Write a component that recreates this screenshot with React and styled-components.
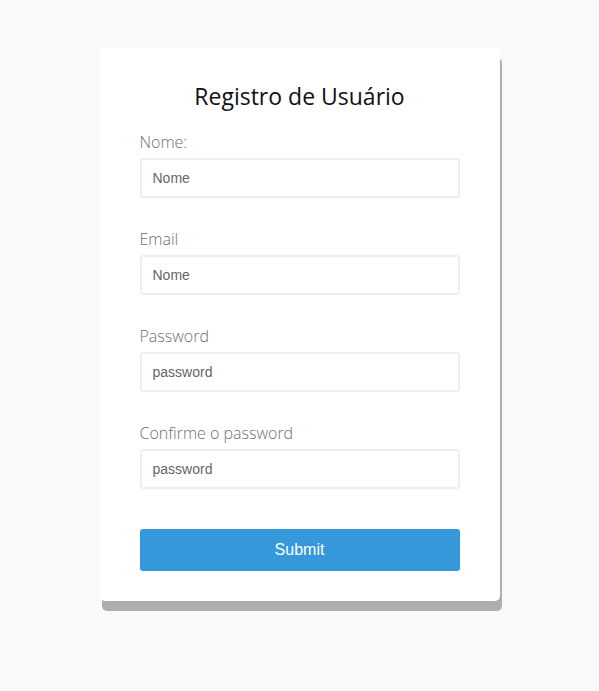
import React from 'react';
import styled, { createGlobalStyle } from 'styled-components';

const GlobalStyle = createGlobalStyle`
  * { box-sizing: border-box; }
  body {
    margin: 0;
    background: #f8f9fa;
    font-family: "Open Sans", sans-serif;
  }
`;

const Page = styled.div`
  display: flex;
  justify-content: center;
  padding: 48px 0 80px;
`;

const Card = styled.form`
  width: 400px;
  background: #ffffff;
  border-radius: 5px;
  padding: 32px 40px 30px;
  box-shadow: 2px 10px 0 #adaeae;
  display: flex;
  flex-direction: column;
`;

const Title = styled.h2`
  margin: 0 0 19px;
  font-size: 23px;
  line-height: 32px;
  font-weight: 400;
  color: #111;
  text-align: center;
`;

const Field = styled.div`
  display: flex;
  flex-direction: column;
  gap: 5px;
  margin-bottom: 30px;

  &:last-of-type {
    margin-bottom: 40px;
  }
`;

const Label = styled.label`
  font-size: 16px;
  line-height: 22px;
  font-weight: 300;
  color: #6b7076;
`;

const Input = styled.input`
  height: 40px;
  border: 2px solid #eeeeee;
  border-radius: 3px;
  padding: 0 11px;
  font-family: "Liberation Sans", Arial, sans-serif;
  font-size: 14px;
  color: #333;
  outline: none;

  &::placeholder {
    color: #666;
  }
`;

const Button = styled.button`
  height: 42px;
  border: none;
  border-radius: 3px;
  background: #3498db;
  color: #ffffff;
  font-family: "Liberation Sans", Arial, sans-serif;
  font-size: 16px;
  cursor: pointer;
`;

const fields = [
  { label: 'Nome:', placeholder: 'Nome', type: 'text' },
  { label: 'Email', placeholder: 'Nome', type: 'email' },
  { label: 'Password', placeholder: 'password', type: 'password' },
  { label: 'Confirme o password', placeholder: 'password', type: 'password' },
];

const App = () => (
  <>
    <GlobalStyle />
    <Page>
      <Card onSubmit={(e) => e.preventDefault()}>
        <Title>Registro de Usuário</Title>
        {fields.map((f) => (
          <Field key={f.label}>
            <Label>{f.label}</Label>
            <Input type={f.type} placeholder={f.placeholder} />
          </Field>
        ))}
        <Button type="submit">Submit</Button>
      </Card>
    </Page>
  </>
);

export default App;
